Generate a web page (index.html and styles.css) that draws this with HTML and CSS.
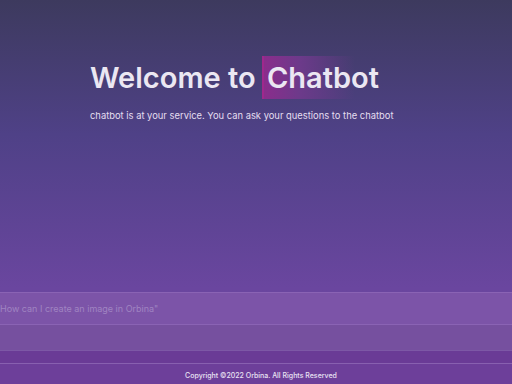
FILE: index.html
```html
<!DOCTYPE html>
<html lang="en">
<head>
    <meta charset="UTF-8">
    <meta name="viewport" content="width=device-width, initial-scale=1.0">
    <title>Chatbot | Orbina</title>
    <link rel="stylesheet" href="styles.css">
</head>
<body>
    <main class="chat">
        <section class="hero">
            <h1>Welcome to <span class="highlight">Chatbot</span></h1>
            <p class="subtitle">chatbot is at your service. You can ask your questions to the chatbot</p>
        </section>
        <div class="ask">
            <input type="text" class="ask-input" placeholder="How can I create an image in Orbina&quot;">
            <div class="ask-gap"></div>
        </div>
    </main>
    <footer class="footer">
        <p>Copyright &copy;2022 Orbina. All Rights Reserved</p>
    </footer>
</body>
</html>
```

FILE: styles.css
```css
*{
    margin: 0;
    padding: 0;
    box-sizing: border-box;
    font-family: Inter, "Noto Sans", sans-serif;
}
body {
    display: flex;
    flex-direction: column;
    height: 100vh;
    background: linear-gradient(180deg, #3d3a5e 0%, #4f4187 35%, #6a469f 75%, #6f449e 100%);
    color: #ece8f4;
}
.chat {
    flex: 1;
    display: flex;
    flex-direction: column;
    justify-content: space-between;
}
.hero {
    padding: 56px 0 0 90px;
}
h1 {
    font-size: 29px;
    font-weight: 600;
    line-height: 43px;
    color: #ebe7f2;
}
.highlight {
    display: inline-block;
    margin-left: -1px;
    padding-left: 3px;
    padding-right: 6px;
    border-left: 2px solid #a0288c;
    background: linear-gradient(90deg, #8a2d8c 0%, #6c3a8a 30%, rgba(80, 64, 135, 0) 75%);
}
.subtitle {
    margin-top: 11px;
    font-size: 9.4px;
    color: #e4def0;
}
.ask {
    display: flex;
    flex-direction: column;
}
.ask-input {
    height: 33px;
    width: 100%;
    border: none;
    border-top: 1px solid #8a63b4;
    border-bottom: 1px solid #8a63b4;
    background: #7c54a8;
    padding: 0;
    font-size: 9px;
    color: #fff;
    outline: none;
}
.ask-input::placeholder {
    color: #a084c2;
}
.ask-gap {
    height: 26px;
    background: #76509f;
    border-bottom: 1px solid #7d58a6;
}
.footer {
    border-top: 12px solid #6a3b96;
    box-shadow: inset 0 1px 0 #8860b0;
    background: #6d3f9a;
    height: 33px;
    display: flex;
    align-items: center;
    justify-content: center;
    padding: 4px 0 0 10px;
}
.footer p {
    font-size: 7px;
    font-weight: 500;
    color: #e9e2f3;
}
```
